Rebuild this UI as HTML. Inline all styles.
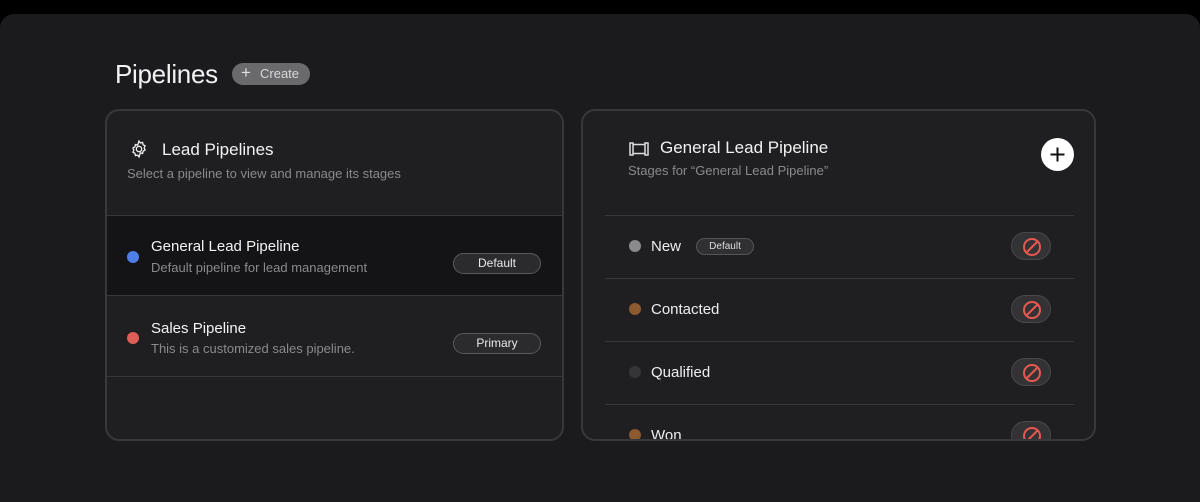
<!DOCTYPE html>
<html><head><meta charset="utf-8"><style>
*{box-sizing:border-box;margin:0;padding:0}
body{width:1200px;height:502px;background:#000;font-family:"Liberation Sans",sans-serif;overflow:hidden;position:relative}
.frame{position:absolute;left:0;top:14px;width:1200px;height:488px;background:#1b1b1d;border-radius:14px 14px 0 0}
.title{position:absolute;left:115px;top:59px;color:#f2f2f2;font-size:26px;font-weight:500;letter-spacing:-0.3px}
.create{position:absolute;left:232px;top:63px;width:78px;height:22px;border-radius:11px;background:#6a6a6c;color:#d8d8d8;font-size:13px;line-height:22px;padding-left:28px}
.create:before{content:"+";position:absolute;left:9px;top:-1px;font-size:17px;color:#e0e0e0}
.card{position:absolute;top:109px;height:332px;background:#1f1f22;border:2px solid #38383b;border-radius:14px;overflow:hidden}
.l{left:105px;width:459px}
.r{left:581px;width:515px}
.h{position:absolute;color:#f2f2f2;font-size:17px}
.s{position:absolute;color:#8a8a8d;font-size:13px}
.row{position:absolute;left:0;width:100%;height:80px;border-top:1px solid #37373a}
.dot{position:absolute;width:12px;height:12px;border-radius:50%}
.pill{position:absolute;width:88px;height:21px;border-radius:11px;border:1px solid #59595c;background:#2b2b2e;color:#e8e8e8;font-size:12px;text-align:center;line-height:19px}
.srow{position:absolute;left:22px;width:469px;height:63px;border-top:1px solid #37373a}
.sname{position:absolute;left:46px;top:22px;color:#eee;font-size:15px}
.ban{position:absolute;left:406px;top:16px;width:40px;height:28px;border-radius:14px;background:#333336;border:1px solid #48484b}
.ban svg{position:absolute;left:10px;top:4px}
</style></head><body>
<div class="frame"></div>
<div class="title">Pipelines</div>
<div class="create">Create</div>

<div class="card l">
  <svg style="position:absolute;left:22px;top:28px" width="20" height="20" viewBox="0 0 24 24" fill="none" stroke="#eee" stroke-width="1.6"><path d="M12 2.5l1.6 2.2 2.7-.6.6 2.7 2.4 1.4-1.1 2.5 1.1 2.5-2.4 1.4-.6 2.7-2.7-.6L12 21.5l-1.6-2.2-2.7.6-.6-2.7-2.4-1.4 1.1-2.5-1.1-2.5 2.4-1.4.6-2.7 2.7.6z"/><circle cx="12" cy="12" r="3.2"/></svg>
  <div class="h" style="left:55px;top:29px">Lead Pipelines</div>
  <div class="s" style="left:20px;top:55px">Select a pipeline to view and manage its stages</div>
  <div class="row" style="top:104px;background:#141416">
    <div class="dot" style="left:20px;top:35px;background:#4f7fe6"></div>
    <div class="h" style="left:44px;top:22px;font-size:15px">General Lead Pipeline</div>
    <div class="s" style="left:44px;top:44px">Default pipeline for lead management</div>
    <div class="pill" style="left:346px;top:37px">Default</div>
  </div>
  <div class="row" style="top:184px">
    <div class="dot" style="left:20px;top:36px;background:#de5e57"></div>
    <div class="h" style="left:44px;top:24px;font-size:15px">Sales Pipeline</div>
    <div class="s" style="left:44px;top:45px">This is a customized sales pipeline.</div>
    <div class="pill" style="left:346px;top:37px">Primary</div>
  </div>
  <div class="row" style="top:265px"></div>
</div>

<div class="card r">
  <svg style="position:absolute;left:46px;top:30px" width="20" height="16" viewBox="0 0 20 16" fill="none" stroke="#ddd" stroke-width="1.5"><rect x="1" y="2" width="3" height="12"/><rect x="16" y="2" width="3" height="12"/><path d="M4 3.5h12M4 12.5h12"/></svg>
  <div class="h" style="left:77px;top:27px">General Lead Pipeline</div>
  <div class="s" style="left:45px;top:52px">Stages for “General Lead Pipeline”</div>
  <div style="position:absolute;left:458px;top:27px;width:33px;height:33px;border-radius:50%;background:#fff">
    <svg width="33" height="33" viewBox="0 0 33 33"><path d="M16.5 9.5v14M9.5 16.5h14" stroke="#111" stroke-width="2"/></svg>
  </div>
  <div class="srow" style="top:104px"><div class="dot" style="left:24px;top:24px;background:#8a8a8c"></div><div class="sname">New</div>
    <div style="position:absolute;left:91px;top:22px;width:58px;height:17px;border-radius:9px;background:#303033;border:1px solid #555;color:#ddd;font-size:10px;text-align:center;line-height:15px">Default</div>
    <div class="ban"><svg width="20" height="20" viewBox="0 0 20 20" fill="none" stroke="#e8584f" stroke-width="2"><circle cx="10" cy="10" r="8"/><path d="M15.5 4.5l-11 11"/></svg></div></div>
  <div class="srow" style="top:167px"><div class="dot" style="left:24px;top:24px;background:#8d5a30"></div><div class="sname">Contacted</div>
    <div class="ban"><svg width="20" height="20" viewBox="0 0 20 20" fill="none" stroke="#e8584f" stroke-width="2"><circle cx="10" cy="10" r="8"/><path d="M15.5 4.5l-11 11"/></svg></div></div>
  <div class="srow" style="top:230px"><div class="dot" style="left:24px;top:24px;background:#353537"></div><div class="sname">Qualified</div>
    <div class="ban"><svg width="20" height="20" viewBox="0 0 20 20" fill="none" stroke="#e8584f" stroke-width="2"><circle cx="10" cy="10" r="8"/><path d="M15.5 4.5l-11 11"/></svg></div></div>
  <div class="srow" style="top:293px"><div class="dot" style="left:24px;top:24px;background:#8d5a30"></div><div class="sname">Won</div>
    <div class="ban"><svg width="20" height="20" viewBox="0 0 20 20" fill="none" stroke="#e8584f" stroke-width="2"><circle cx="10" cy="10" r="8"/><path d="M15.5 4.5l-11 11"/></svg></div></div>
</div>
</body></html>
